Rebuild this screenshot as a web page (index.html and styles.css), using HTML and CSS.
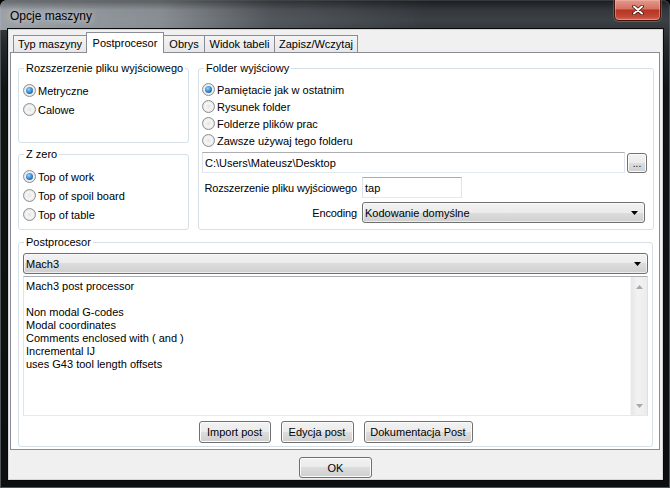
FILE: index.html
```html
<!DOCTYPE html>
<html lang="pl">
<head>
    <meta charset="UTF-8">
    <link rel="stylesheet" href="styles.css">
    <title>Opcje maszyny</title>
</head>
<body>
    <div class="window">
        <!-- Pasek tytułu -->
        <div class="titlebar">
            <span class="title">Opcje maszyny</span>
            <div class="close">
                <svg width="12" height="10" viewBox="0 0 12 10">
                    <path d="M2 1.5 L10 8.5 M10 1.5 L2 8.5" stroke="#3a1410" stroke-width="3.6" stroke-linecap="round"/>
                    <path d="M2 1.5 L10 8.5 M10 1.5 L2 8.5" stroke="#fff" stroke-width="2" stroke-linecap="round"/>
                </svg>
            </div>
        </div>

        <div class="client">
            <!-- Zakładki -->
            <div class="tabs">
                <div class="tab tab-typ">Typ maszyny</div>
                <div class="tab tab-post active">Postprocesor</div>
                <div class="tab tab-obrys">Obrys</div>
                <div class="tab tab-widok">Widok tabeli</div>
                <div class="tab tab-zapisz">Zapisz/Wczytaj</div>
            </div>

            <div class="panel">
                <div class="top-row">
                    <div class="left-col">
                        <div class="group g-ext">
                            <span class="caption">Rozszerzenie pliku wyjściowego</span>
                            <div class="radio-row"><span class="radio checked"></span>Metryczne</div>
                            <div class="radio-row"><span class="radio"></span>Calowe</div>
                        </div>
                        <div class="group g-zero">
                            <span class="caption">Z zero</span>
                            <div class="radio-row"><span class="radio checked"></span>Top of work</div>
                            <div class="radio-row"><span class="radio"></span>Top of spoil board</div>
                            <div class="radio-row"><span class="radio"></span>Top of table</div>
                        </div>
                    </div>

                    <div class="group g-folder">
                        <span class="caption">Folder wyjściowy</span>
                        <div class="radio-row"><span class="radio checked"></span>Pamiętacie jak w ostatnim</div>
                        <div class="radio-row"><span class="radio"></span>Rysunek folder</div>
                        <div class="radio-row"><span class="radio"></span>Folderze plików prac</div>
                        <div class="radio-row"><span class="radio"></span>Zawsze używaj tego folderu</div>
                        <div class="path-row">
                            <div class="textbox path">C:\Users\Mateusz\Desktop</div>
                            <div class="btn btn-browse">...</div>
                        </div>
                        <div class="form-grid">
                            <span class="form-label">Rozszerzenie pliku wyjściowego</span>
                            <div class="textbox ext">tap</div>
                            <span class="form-label">Encoding</span>
                            <div class="combo encoding">
                                <span>Kodowanie domyślne</span>
                                <svg class="arrow" width="7" height="4" viewBox="0 0 7 4"><path d="M0 0 H7 L3.5 4 Z" fill="#000"/></svg>
                            </div>
                        </div>
                    </div>
                </div>

                <div class="group g-post">
                    <span class="caption">Postprocesor</span>
                    <div class="combo">
                        <span>Mach3</span>
                        <svg class="arrow" width="7" height="4" viewBox="0 0 7 4"><path d="M0 0 H7 L3.5 4 Z" fill="#000"/></svg>
                    </div>
                    <div class="memo">
                        <div class="memo-text">Mach3 post processor

Non modal G-codes
Modal coordinates
Comments enclosed with ( and )
Incremental IJ
uses G43 tool length offsets</div>
                        <div class="scrollbar">
                            <svg width="7" height="4" viewBox="0 0 7 4"><path d="M0 4 H7 L3.5 0 Z" fill="#a8a8a8"/></svg>
                            <svg width="7" height="4" viewBox="0 0 7 4"><path d="M0 0 H7 L3.5 4 Z" fill="#a8a8a8"/></svg>
                        </div>
                    </div>
                    <div class="post-buttons">
                        <div class="btn btn-import">Import post</div>
                        <div class="btn btn-edit">Edycja post</div>
                        <div class="btn btn-doc">Dokumentacja Post</div>
                    </div>
                </div>
            </div>

            <div class="btn btn-ok">OK</div>
        </div>
    </div>
</body>
</html>
```

FILE: styles.css
```css
body {
    margin: 0;
    background-color: #000;
    font-family: 'Liberation Sans', Arial, sans-serif;
    font-size: 11px;
    color: #000;
}

/* Okno */
.window {
    width: 670px;
    height: 488px;
    display: flex;
    flex-direction: column;
    border-radius: 7px 7px 0 0;
    background: linear-gradient(180deg, #2b2f33 0, #3b4045 20px, #24282b 45px, #111315 90px, #0c0e10 100%);
    box-shadow: inset 0 0 0 1px #50555a;
}

.titlebar {
    height: 30px;
    flex: none;
    display: flex;
    justify-content: space-between;
    align-items: flex-start;
    border-radius: 7px 7px 0 0;
    background:
        linear-gradient(180deg, rgba(0, 0, 0, 0.35) 0, rgba(0, 0, 0, 0) 10px),
        linear-gradient(90deg, rgba(190, 196, 202, 0.75) 0, rgba(170, 176, 182, 0.7) 160px, rgba(120, 126, 132, 0.4) 270px, rgba(0, 0, 0, 0) 430px);
}

.title {
    padding: 9px 0 0 10px;
    font-size: 12px;
    line-height: 14px;
    color: #000;
    text-shadow: 0 0 6px rgba(255, 255, 255, 0.6), 0 0 12px rgba(255, 255, 255, 0.4);
}

.close {
    width: 47px;
    height: 21px;
    margin-right: 9px;
    box-sizing: border-box;
    border: 1px solid #4a120c;
    border-top: none;
    border-radius: 0 0 5px 5px;
    background: linear-gradient(180deg, #e09a8e 0, #d5705f 45%, #b93322 50%, #c24a38 85%, #d0705c 100%);
    box-shadow: inset 0 0 0 1px rgba(255, 190, 175, 0.45), 0 0 0 1px rgba(200, 200, 200, 0.25);
    display: flex;
    align-items: center;
    justify-content: center;
}

.client {
    margin: 0 8px 9px 9px;
    height: 449px;
    box-sizing: border-box;
    background-color: #f0f0f0;
    box-shadow: 0 0 0 1px #d3d6d9, 0 0 0 2px #08090a;
}

/* Zakładki */
.tabs {
    height: 22px;
    display: flex;
    align-items: flex-end;
    padding-left: 4px;
}

.tab {
    height: 17px;
    box-sizing: border-box;
    border: 1px solid #898c95;
    border-bottom: none;
    margin-left: -1px;
    background: linear-gradient(180deg, #f4f4f4, #e7e7e7);
    display: flex;
    align-items: center;
    justify-content: center;
}

.tab-typ { width: 74px; margin-left: 0; }
.tab-post { width: 78px; }
.tab-obrys { width: 42px; }
.tab-widok { width: 71px; }
.tab-zapisz { width: 84px; }

.tab.active {
    height: 21px;
    margin-bottom: -1px;
    background: #fff;
    position: relative;
    z-index: 1;
}

.panel {
    margin-left: 1px;
    width: 650px;
    height: 398px;
    box-sizing: border-box;
    border: 1px solid #898c95;
    background-color: #fff;
    padding: 15px 5px 2px 7px;
}

.top-row {
    height: 162px;
    display: flex;
    gap: 9px;
}

.left-col {
    width: 171px;
    display: flex;
    flex-direction: column;
    gap: 11px;
}

/* Ramki grup */
.group {
    position: relative;
    box-sizing: border-box;
    border: 1px solid #d5dfe5;
    border-radius: 3px;
}

.caption {
    position: absolute;
    top: -7px;
    left: 5px;
    padding: 0 2px;
    background-color: #fff;
    line-height: 13px;
}

.g-ext {
    height: 75px;
    padding: 12px 0 0 4px;
}

.g-zero {
    height: 76px;
    padding: 12px 0 0 4px;
}

.g-folder {
    width: 456px;
    padding: 12px 0 0 3px;
}

.radio-row {
    height: 19px;
    display: flex;
    align-items: center;
}

.g-folder .radio-row {
    height: 17px;
}

.radio {
    width: 13px;
    height: 13px;
    flex: none;
    box-sizing: border-box;
    margin-right: 2px;
    border-radius: 50%;
    border: 1px solid #8e8f8f;
    background: radial-gradient(circle at 50% 50%, #e4e4e4 0, #f6f6f6 45%, #d2d2d2 100%);
    display: flex;
    align-items: center;
    justify-content: center;
}

.radio.checked::after {
    content: "";
    width: 7px;
    height: 7px;
    border-radius: 50%;
    background: radial-gradient(circle at 40% 35%, #9cd8ff 0, #3c8fd6 45%, #0e4680 100%);
}

/* Pola tekstowe */
.textbox {
    box-sizing: border-box;
    background-color: #fff;
    border: 1px solid;
    border-color: #abadb3 #e2e3ea #e3e9ef #dbdfe6;
    padding-left: 2px;
    display: flex;
    align-items: center;
}

.path-row {
    margin-top: 3px;
    display: flex;
    align-items: center;
    gap: 2px;
}

.path {
    width: 423px;
    height: 21px;
}

.form-grid {
    margin-top: 4px;
    display: grid;
    grid-template-columns: 157px 283px;
    column-gap: 3px;
    row-gap: 4px;
    align-items: center;
}

.form-label {
    justify-self: end;
    padding-right: 2px;
    white-space: nowrap;
    letter-spacing: -0.15px;
}

.ext {
    width: 100px;
    height: 21px;
}

/* Listy rozwijane */
.combo {
    height: 21px;
    box-sizing: border-box;
    border: 1px solid #707070;
    border-radius: 3px;
    padding: 0 6px 0 2px;
    background: linear-gradient(180deg, #f2f2f2 0, #ebebeb 50%, #dddddd 50%, #cfcfcf 100%);
    box-shadow: inset 0 0 0 1px rgba(255, 255, 255, 0.6);
    display: flex;
    align-items: center;
    justify-content: space-between;
}

.arrow {
    flex: none;
}

/* Postprocesor */
.g-post {
    margin-top: 12px;
    width: 635px;
    height: 205px;
    padding: 10px 4px 3px 4px;
}

.memo {
    margin-top: 2px;
    height: 140px;
    box-sizing: border-box;
    border: 1px solid;
    border-color: #abadb3 #dbdfe6 #e3e9ef #e2e3ea;
    display: flex;
}

.memo-text {
    flex: 1;
    padding: 3px 2px;
    line-height: 13px;
    white-space: pre;
}

.scrollbar {
    width: 17px;
    background: linear-gradient(90deg, #e6e6e6, #f2f2f2 40%, #ececec);
    border-left: 1px solid #f6f6f6;
    display: flex;
    flex-direction: column;
    justify-content: space-between;
    align-items: center;
    padding: 8px 0 7px;
    box-sizing: border-box;
}

.post-buttons {
    margin-top: 5px;
    display: flex;
    justify-content: center;
    gap: 10px;
}

/* Przyciski */
.btn {
    height: 22px;
    box-sizing: border-box;
    border: 1px solid #707070;
    border-radius: 3px;
    background: linear-gradient(180deg, #f2f2f2 0, #ebebeb 50%, #dddddd 50%, #cfcfcf 100%);
    box-shadow: inset 0 0 0 1px #fbfbfb;
    display: flex;
    align-items: center;
    justify-content: center;
}

.btn-import { width: 72px; }
.btn-edit { width: 73px; }
.btn-doc { width: 109px; }

.btn-browse {
    width: 20px;
    height: 20px;
    align-items: flex-end;
    padding-bottom: 3px;
    font-size: 10px;
    line-height: 10px;
}

.btn-ok {
    width: 73px;
    height: 21px;
    margin: 7px auto 0;
}
```
